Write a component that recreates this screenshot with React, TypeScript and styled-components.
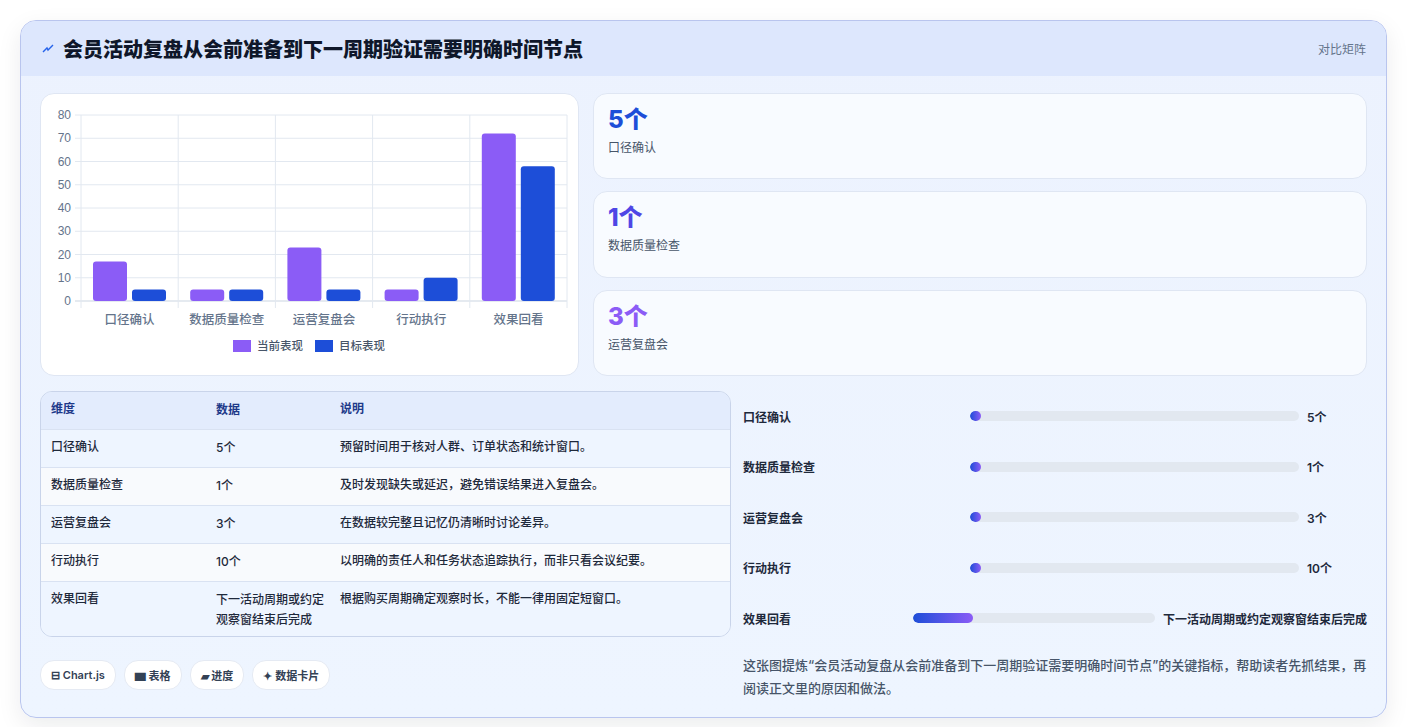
import React from "react";
import styled, { createGlobalStyle } from "styled-components";

const Global = createGlobalStyle`
  body { margin: 0; background: #fff; font-family: Inter, "Noto Sans CJK SC", sans-serif; }
`;

const Page = styled.div`
  padding: 20px 21px 22px 20px;
`;

const Card = styled.div`
  border: 1px solid #b9c5ee;
  border-radius: 16px;
  background: linear-gradient(180deg, #ecf2fe 0%, #eef5ff 100%);
  box-shadow: 0 8px 24px rgba(15, 23, 42, 0.08);
  overflow: hidden;
`;

const Header = styled.div`
  height: 55px;
  background: #dde7fd;
  display: flex;
  align-items: center;
  padding: 0 20px 0 21px;
  gap: 9px;
`;

const Title = styled.h1`
  margin: 0;
  flex: 1;
  font-size: 20px;
  font-weight: 800;
  color: #0f172a;
`;

const HeaderTag = styled.span`
  font-size: 12px;
  color: #64748b;
`;

const Body = styled.div`
  padding: 17px 19px 17px 19px;
  display: flex;
  flex-direction: column;
  gap: 15px;
`;

const Split = styled.div<{ $left: number }>`
  display: grid;
  grid-template-columns: ${({ $left }) => $left}px 1fr;
  column-gap: ${({ $left }) => ($left > 600 ? 12 : 14)}px;
`;

const Panel = styled.div`
  background: #fff;
  border: 1px solid #dfe6f3;
  border-radius: 14px;
  height: 281px;
`;

const Stats = styled.div`
  display: flex;
  flex-direction: column;
  gap: 12px;
`;

const StatCard = styled.div`
  flex: 1;
  background: #f8fbff;
  border: 1px solid #dfe6f3;
  border-radius: 14px;
  padding: 10px 14px;
`;

const StatValue = styled.div<{ $color: string }>`
  font-size: 24px;
  font-weight: 800;
  color: ${({ $color }) => $color};
  line-height: 32px;
`;

const StatLabel = styled.div`
  font-size: 12px;
  color: #475569;
  margin-top: 2px;
`;

const Table = styled.div`
  border: 1px solid #c9d4ea;
  border-radius: 12px;
  overflow: hidden;
  font-size: 12px;
  color: #1e293b;
  height: 244px;
  background: #eef5ff;
`;

const Row = styled.div<{ $head?: boolean; $alt?: boolean }>`
  display: grid;
  grid-template-columns: 165px 124px 1fr;
  padding: 8px 10px 9px;
  line-height: 17px;
  border-bottom: 1px solid #d9e2f2;
  background: ${({ $head, $alt }) => ($head ? "#e3ecfd" : $alt ? "#f8fafd" : "#eef5ff")};
  color: ${({ $head }) => ($head ? "#1e3a8a" : "#1e293b")};
  font-weight: ${({ $head }) => ($head ? 700 : 500)};
  &:last-child { border-bottom: none; }
  & > span:nth-child(2) { padding-right: 10px; line-height: 20px; }
`;

const Progress = styled.div`
  display: flex;
  flex-direction: column;
`;

const PRow = styled.div`
  display: grid;
  grid-template-columns: 2fr 3fr minmax(60px, auto);
  align-items: center;
  column-gap: 8px;
  height: 50.5px;
  font-size: 12px;
  font-weight: 600;
  color: #1e293b;
`;

const Track = styled.div`
  height: 10px;
  border-radius: 5px;
  background: #e2e8f0;
  overflow: hidden;
`;

const Fill = styled.div`
  height: 100%;
  min-width: 11px;
  border-radius: 5px;
  background: linear-gradient(90deg, #1d4ed8, #8b5cf6);
`;

const Note = styled.p`
  margin: 10px 0 0 0;
  font-size: 13px;
  line-height: 23px;
  color: #475569;
  font-weight: 500;
`;

const Tags = styled.div`
  display: flex;
  gap: 8px;
  margin-top: 23px;
`;

const Tag = styled.span`
  height: 28px;
  padding: 0 10px;
  display: inline-flex;
  align-items: center;
  gap: 3px;
  border-radius: 14px;
  background: #fff;
  border: 1px solid #e5eaf3;
  font-size: 11px;
  font-weight: 600;
  color: #334155;
`;

const cats = ["口径确认", "数据质量检查", "运营复盘会", "行动执行", "效果回看"];
const cur = [17, 5, 23, 5, 72];
const tgt = [5, 5, 5, 10, 58];

function Chart() {
  const x0 = 40, x1 = 526, yt = 21, yb = 207;
  const cw = (x1 - x0) / 5;
  const y = (v: number) => yb - ((yb - yt) * v) / 80;
  return (
    <svg width="538" height="279" style={{ display: "block" }}>
      {[0, 10, 20, 30, 40, 50, 60, 70, 80].map((v) => (
        <g key={v}>
          <line x1={x0 - 6} x2={x1} y1={y(v)} y2={y(v)} stroke={v === 0 ? "#cbd5e1" : "#e2e8f0"} />
          <text x={x0 - 10} y={y(v) + 4} textAnchor="end" fontSize="12" fill="#64748b" fontFamily="Liberation Sans, sans-serif">{v}</text>
        </g>
      ))}
      {[0, 1, 2, 3, 4, 5].map((i) => (
        <line key={i} x1={x0 + i * cw} x2={x0 + i * cw} y1={yt} y2={yb + 7} stroke="#e2e8f0" />
      ))}
      {cats.map((c, i) => (
        <g key={c}>
          <rect x={x0 + i * cw + 12} y={y(cur[i])} width="34" height={yb - y(cur[i])} rx="3" fill="#8b5cf6" />
          <rect x={x0 + i * cw + 51} y={y(tgt[i])} width="34" height={yb - y(tgt[i])} rx="3" fill="#1d4ed8" />
          <text x={x0 + i * cw + cw / 2} y={230} textAnchor="middle" fontSize="12.5" fontWeight="500" fill="#64748b" fontFamily="Noto Sans CJK SC, sans-serif">{c}</text>
        </g>
      ))}
      <rect x="192" y="246" width="18" height="12" fill="#8b5cf6" />
      <text x="216" y="256" fontSize="11.5" fontWeight="500" fill="#475569" fontFamily="Noto Sans CJK SC, sans-serif">当前表现</text>
      <rect x="274" y="246" width="18" height="12" fill="#1d4ed8" />
      <text x="298" y="256" fontSize="11.5" fontWeight="500" fill="#475569" fontFamily="Noto Sans CJK SC, sans-serif">目标表现</text>
    </svg>
  );
}

const rows = [
  ["口径确认", "5个", "预留时间用于核对人群、订单状态和统计窗口。"],
  ["数据质量检查", "1个", "及时发现缺失或延迟，避免错误结果进入复盘会。"],
  ["运营复盘会", "3个", "在数据较完整且记忆仍清晰时讨论差异。"],
  ["行动执行", "10个", "以明确的责任人和任务状态追踪执行，而非只看会议纪要。"],
  ["效果回看", "下一活动周期或约定观察窗结束后完成", "根据购买周期确定观察时长，不能一律用固定短窗口。"],
];

const prog: [string, string, number][] = [
  ["口径确认", "5个", 2],
  ["数据质量检查", "1个", 1],
  ["运营复盘会", "3个", 2],
  ["行动执行", "10个", 3],
  ["效果回看", "下一活动周期或约定观察窗结束后完成", 25],
];

export default function App() {
  return (
    <Page>
      <Global />
      <Card>
        <Header>
          <svg width="12" height="12" viewBox="0 0 12 12"><path d="M1 9 L5 5 L6 7 L11 2" stroke="#2563eb" strokeWidth="1.4" fill="none" /></svg>
          <Title>会员活动复盘从会前准备到下一周期验证需要明确时间节点</Title>
          <HeaderTag>对比矩阵</HeaderTag>
        </Header>
        <Body>
          <Split $left={539}>
            <Panel><Chart /></Panel>
            <Stats>
              <StatCard><StatValue $color="#1d4ed8">5个</StatValue><StatLabel>口径确认</StatLabel></StatCard>
              <StatCard><StatValue $color="#4f46e5">1个</StatValue><StatLabel>数据质量检查</StatLabel></StatCard>
              <StatCard><StatValue $color="#8b5cf6">3个</StatValue><StatLabel>运营复盘会</StatLabel></StatCard>
            </Stats>
          </Split>
          <Split $left={691}>
            <div>
              <Table>
                <Row $head><span>维度</span><span>数据</span><span>说明</span></Row>
                {rows.map((r, i) => (
                  <Row key={r[0]} $alt={i % 2 === 1}><span>{r[0]}</span><span>{r[1]}</span><span>{r[2]}</span></Row>
                ))}
              </Table>
              <Tags>
                <Tag>⊟ Chart.js</Tag>
                <Tag>▆ 表格</Tag>
                <Tag>▰ 进度</Tag>
                <Tag>✦ 数据卡片</Tag>
              </Tags>
            </div>
            <div>
              <Progress>
                {prog.map(([l, v, p]) => (
                  <PRow key={l}>
                    <span>{l}</span>
                    <Track><Fill style={{ width: `${p}%` }} /></Track>
                    <span>{v}</span>
                  </PRow>
                ))}
              </Progress>
              <Note>这张图提炼“会员活动复盘从会前准备到下一周期验证需要明确时间节点”的关键指标，帮助读者先抓结果，再阅读正文里的原因和做法。</Note>
            </div>
          </Split>
        </Body>
      </Card>
    </Page>
  );
}
